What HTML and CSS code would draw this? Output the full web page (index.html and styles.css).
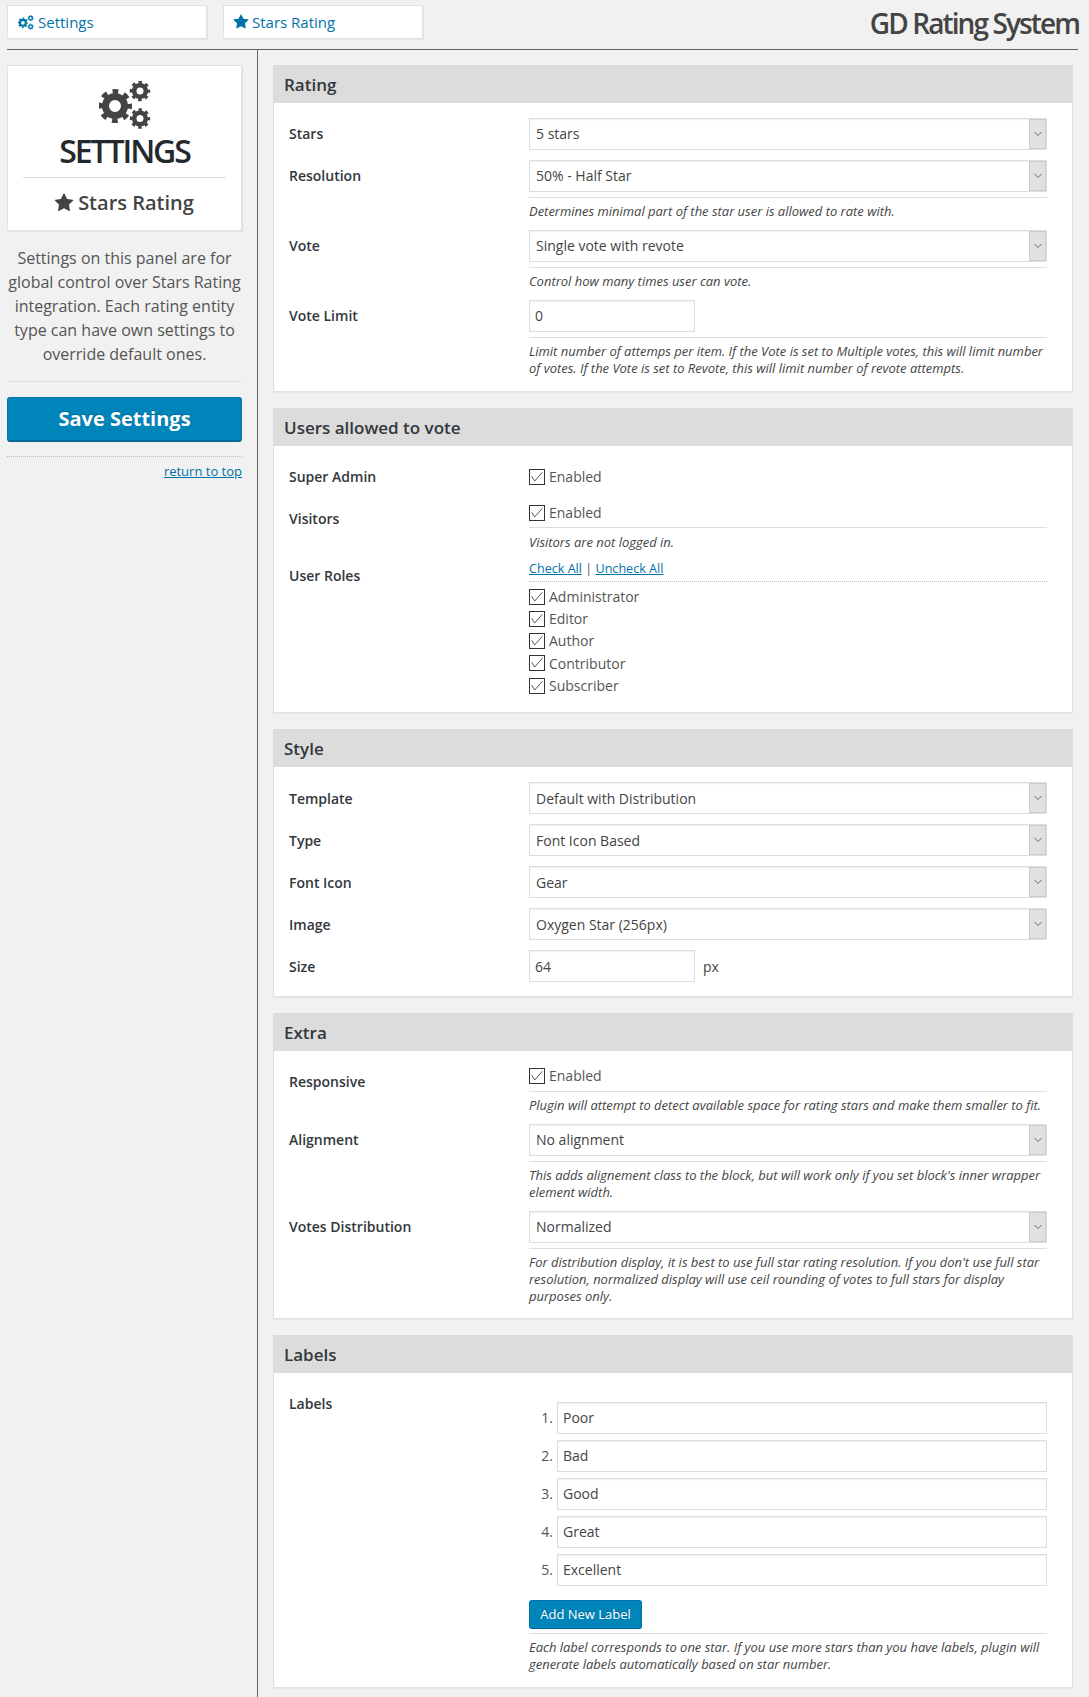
FILE: index.html
```html
<!DOCTYPE html>
<html lang="en">
<head>
<meta charset="utf-8">
<title>GD Rating System</title>
<link rel="stylesheet" href="styles.css">
</head>
<body>
<svg class="sprite" width="0" height="0" aria-hidden="true">
  <symbol id="gears" viewBox="0 0 52 48">
    <g fill="none" stroke="currentColor">
      <circle cx="16" cy="25" r="9.5" stroke-width="7"/>
      <circle cx="16" cy="25" r="14.5" stroke-width="5" stroke-dasharray="5.7 5.69" stroke-dashoffset="2.85"/>
      <circle cx="41" cy="10" r="5.8" stroke-width="4.6"/>
      <circle cx="41" cy="10" r="8.6" stroke-width="3.2" stroke-dasharray="3.4 3.35" stroke-dashoffset="1.7"/>
      <circle cx="41" cy="37.5" r="5.8" stroke-width="4.6"/>
      <circle cx="41" cy="37.5" r="8.6" stroke-width="3.2" stroke-dasharray="3.4 3.35" stroke-dashoffset="1.7"/>
    </g>
  </symbol>
  <symbol id="star" viewBox="0 0 1792 1792">
    <path fill="currentColor" d="M1728 647q0 22-26 48l-363 354 86 500q1 7 1 20 0 21-10.5 35.5t-30.5 14.5q-19 0-40-12l-449-236-449 236q-22 12-40 12-21 0-31.5-14.5t-10.5-35.5q0-6 2-20l86-500-364-354q-25-27-25-48 0-37 56-46l502-73 225-455q19-41 49-41t49 41l225 455 502 73q56 9 56 46z"/>
  </symbol>
  <symbol id="tick" viewBox="0 0 14 14">
    <path fill="none" stroke="currentColor" stroke-width="1" d="M1.7 6.3l3 4.7 7.6-8.7"/>
  </symbol>
  <symbol id="chev" viewBox="0 0 10 6">
    <path fill="none" stroke="currentColor" stroke-width="1" d="M1.5 1l3.5 3.5 3.5-3.5"/>
  </symbol>
</svg>

<header class="topbar">
  <a class="tab" href="#"><svg class="tab-gears"><use href="#gears"/></svg>Settings</a>
  <a class="tab" href="#"><svg class="tab-star"><use href="#star"/></svg>Stars Rating</a>
  <div class="brand">GD Rating System</div>
</header>

<div class="layout">
  <aside class="sidebar">
    <div class="card">
      <svg class="card-gears"><use href="#gears"/></svg>
      <div class="card-title">SETTINGS</div>
      <div class="card-sub"><svg class="card-star"><use href="#star"/></svg>Stars Rating</div>
    </div>
    <p class="intro">Settings on this panel are for global control over Stars Rating integration. Each rating entity type can have own settings to override default ones.</p>
    <button class="save" type="button">Save Settings</button>
    <div class="totop"><a href="#">return to top</a></div>
  </aside>

  <main class="main">
    <section class="panel">
      <h3 class="panel-head">Rating</h3>
      <div class="panel-body">
        <div class="row"><div class="label">Stars</div><div class="field">
          <div class="select"><span>5 stars</span><i class="arrow"><svg><use href="#chev"/></svg></i></div>
        </div></div>
        <div class="row"><div class="label">Resolution</div><div class="field">
          <div class="select"><span>50% - Half Star</span><i class="arrow"><svg><use href="#chev"/></svg></i></div>
          <p class="desc">Determines minimal part of the star user is allowed to rate with.</p>
        </div></div>
        <div class="row"><div class="label">Vote</div><div class="field">
          <div class="select"><span>Single vote with revote</span><i class="arrow"><svg><use href="#chev"/></svg></i></div>
          <p class="desc">Control how many times user can vote.</p>
        </div></div>
        <div class="row"><div class="label">Vote Limit</div><div class="field">
          <div class="text short">0</div>
          <p class="desc">Limit number of attemps per item. If the Vote is set to Multiple votes, this will limit number of votes. If the Vote is set to Revote, this will limit number of revote attempts.</p>
        </div></div>
      </div>
    </section>

    <section class="panel">
      <h3 class="panel-head">Users allowed to vote</h3>
      <div class="panel-body">
        <div class="row"><div class="label">Super Admin</div><div class="field">
          <div class="check tall"><span class="box"><svg><use href="#tick"/></svg></span>Enabled</div>
        </div></div>
        <div class="row"><div class="label">Visitors</div><div class="field">
          <div class="check"><span class="box"><svg><use href="#tick"/></svg></span>Enabled</div>
          <p class="desc tight">Visitors are not logged in.</p>
        </div></div>
        <div class="row"><div class="label">User Roles</div><div class="field">
          <div class="links"><a href="#">Check All</a> | <a href="#">Uncheck All</a></div>
          <div class="roles">
            <div class="check"><span class="box"><svg><use href="#tick"/></svg></span>Administrator</div>
            <div class="check"><span class="box"><svg><use href="#tick"/></svg></span>Editor</div>
            <div class="check"><span class="box"><svg><use href="#tick"/></svg></span>Author</div>
            <div class="check"><span class="box"><svg><use href="#tick"/></svg></span>Contributor</div>
            <div class="check"><span class="box"><svg><use href="#tick"/></svg></span>Subscriber</div>
          </div>
        </div></div>
      </div>
    </section>

    <section class="panel">
      <h3 class="panel-head">Style</h3>
      <div class="panel-body body-style">
        <div class="row"><div class="label">Template</div><div class="field">
          <div class="select"><span>Default with Distribution</span><i class="arrow"><svg><use href="#chev"/></svg></i></div>
        </div></div>
        <div class="row"><div class="label">Type</div><div class="field">
          <div class="select"><span>Font Icon Based</span><i class="arrow"><svg><use href="#chev"/></svg></i></div>
        </div></div>
        <div class="row"><div class="label">Font Icon</div><div class="field">
          <div class="select"><span>Gear</span><i class="arrow"><svg><use href="#chev"/></svg></i></div>
        </div></div>
        <div class="row"><div class="label">Image</div><div class="field">
          <div class="select"><span>Oxygen Star (256px)</span><i class="arrow"><svg><use href="#chev"/></svg></i></div>
        </div></div>
        <div class="row"><div class="label">Size</div><div class="field inline">
          <div class="text short">64</div><span class="unit">px</span>
        </div></div>
      </div>
    </section>

    <section class="panel">
      <h3 class="panel-head">Extra</h3>
      <div class="panel-body body-extra">
        <div class="row"><div class="label">Responsive</div><div class="field">
          <div class="check"><span class="box"><svg><use href="#tick"/></svg></span>Enabled</div>
          <p class="desc">Plugin will attempt to detect available space for rating stars and make them smaller to fit.</p>
        </div></div>
        <div class="row"><div class="label">Alignment</div><div class="field">
          <div class="select"><span>No alignment</span><i class="arrow"><svg><use href="#chev"/></svg></i></div>
          <p class="desc">This adds alignement class to the block, but will work only if you set block's inner wrapper element width.</p>
        </div></div>
        <div class="row"><div class="label">Votes Distribution</div><div class="field">
          <div class="select"><span>Normalized</span><i class="arrow"><svg><use href="#chev"/></svg></i></div>
          <p class="desc">For distribution display, it is best to use full star rating resolution. If you don't use full star resolution, normalized display will use ceil rounding of votes to full stars for display purposes only.</p>
        </div></div>
      </div>
    </section>

    <section class="panel">
      <h3 class="panel-head">Labels</h3>
      <div class="panel-body">
        <div class="row"><div class="label">Labels</div><div class="field">
          <ol class="label-list">
            <li><span class="num">1.</span><div class="text">Poor</div></li>
            <li><span class="num">2.</span><div class="text">Bad</div></li>
            <li><span class="num">3.</span><div class="text">Good</div></li>
            <li><span class="num">4.</span><div class="text">Great</div></li>
            <li><span class="num">5.</span><div class="text">Excellent</div></li>
          </ol>
          <button class="add" type="button">Add New Label</button>
          <p class="desc">Each label corresponds to one star. If you use more stars than you have labels, plugin will generate labels automatically based on star number.</p>
        </div></div>
      </div>
    </section>
  </main>
</div>
</body>
</html>
```
FILE: styles.css
```css
* { box-sizing: border-box; }
html, body { margin: 0; padding: 0; }
body {
  background: #f1f1f1;
  color: #444;
  font: 14px/1.4 "Open Sans", sans-serif;
  height: 1697px;
  overflow: hidden;
}
a { color: #0073aa; }
.sprite { position: absolute; }

.topbar {
  display: flex;
  gap: 16px;
  margin: 0 11px 0 7px;
  padding-top: 5px;
  height: 50px;
  border-bottom: 1px solid #666;
}
.tab {
  width: 200px;
  height: 34px;
  background: #fff;
  border: 1px solid #e2e2e2;
  box-shadow: 1px 1px 1px rgba(0,0,0,.05);
  display: flex;
  align-items: center;
  padding-left: 10px;
  font-size: 15px;
  color: #0073aa;
  text-decoration: none;
}
.tab-gears { width: 16px; height: 15px; margin-right: 4px; }
.tab-star { width: 16px; height: 16px; margin-left: -1px; margin-right: 3px; }
.brand {
  margin-left: auto;
  margin-right: -1px;
  margin-top: -1px;
  font-size: 28px;
  line-height: 38px;
  font-weight: 600;
  letter-spacing: -1.9px;
  color: #444;
}

.layout { display: flex; margin-left: 7px; margin-right: 11px; }
.sidebar {
  width: 251px;
  padding: 15px 15px 0 0;
  border-right: 1px solid #666;
  min-height: 1647px;
}
.card {
  background: #fff;
  border: 1px solid #e2e2e2;
  box-shadow: 1px 1px 1px rgba(0,0,0,.06);
  height: 166px;
  padding: 15px 15px 0;
  text-align: center;
}
.card-gears { display: block; width: 52px; height: 48px; margin: 0 auto; color: #444; }
.card-title {
  font-size: 32px;
  line-height: 42px;
  letter-spacing: -2.1px;
  color: #23282d;
  font-weight: 600;
  margin-top: 1px;
  padding-bottom: 5px;
  border-bottom: 1px solid #ddd;
}
.card-sub {
  display: flex;
  align-items: center;
  justify-content: center;
  font-size: 20px;
  font-weight: 600;
  line-height: 28px;
  margin-top: 11px;
  color: #444;
}
.card-star { width: 20px; height: 20px; margin-left: -1px; margin-right: 4px; color: #444; }
.intro {
  margin: 0;
  padding: 15px 0 0;
  height: 151px;
  font-size: 16px;
  line-height: 24px;
  text-align: center;
  color: #555;
  border-bottom: 1px solid #ddd;
}
.save {
  display: block;
  width: 100%;
  height: 45px;
  margin-top: 15px;
  background: #0085ba;
  border: 1px solid #0073aa;
  border-bottom: 2px solid #006799;
  border-radius: 3px;
  color: #fff;
  font: 700 20px/1 "Open Sans", sans-serif;
  text-shadow: 0 -1px 1px #006799;
}
.totop {
  margin-top: 14px;
  border-top: 1px dotted #bbb;
  padding-top: 5px;
  text-align: right;
  font-size: 13px;
  line-height: 19px;
}

.main { flex: 1; padding: 15px 5px 0 15px; }
.panel {
  background: #fff;
  border: 1px solid #e2e2e2;
  border-top: 0;
  box-shadow: 0 1px 1px rgba(0,0,0,.04);
  margin-bottom: 16px;
}
.panel-head {
  margin: 0 -1px;
  height: 38px;
  padding-left: 11px;
  background: #dcdcdc;
  color: #32373c;
  font-size: 17px;
  font-weight: 600;
  line-height: 40px;
}
.panel-body { padding: 15px 25px 14px 15px; }
.body-extra { padding-bottom: 13px; }
.row { display: flex; margin-bottom: 10px; }
.row:last-child { margin-bottom: 0; }
.label {
  flex: 0 0 240px;
  font-weight: 600;
  line-height: 32px;
  color: #32373c;
}
.field { flex: 1; min-width: 0; }
.field.inline { display: flex; align-items: center; }
.unit { margin: 2px 0 0 8px; }

.select, .text {
  height: 32px;
  background: #fff;
  border: 1px solid #ddd;
  box-shadow: inset 0 1px 2px rgba(0,0,0,.07);
  line-height: 30px;
  color: #444;
}
.select { display: flex; justify-content: space-between; padding-left: 6px; }
.text { padding-left: 5px; }
.text.short { width: 166px; }
.body-style .label { line-height: 34px; height: 32px; }
.body-style .select, .body-style .text { line-height: 32px; }
.arrow {
  width: 17px;
  height: 30px;
  background: #e1e1e1;
  border: 1px solid #ccc;
  display: flex;
  align-items: center;
  justify-content: center;
}
.arrow svg { width: 10px; height: 6px; color: #666; }

.desc {
  margin: 5px 0 0;
  padding-top: 5px;
  border-top: 1px solid #ddd;
  font-size: 12.98px;
  font-style: italic;
  line-height: 17px;
  color: #444;
}
.desc.tight { margin-top: 4px; padding-top: 6px; height: 23px; }
.check {
  display: flex;
  align-items: center;
  height: 20px;
  color: #555;
}
.check.tall { height: 32px; }
.box {
  width: 16px;
  height: 16px;
  margin-right: 4px;
  background: #fff;
  border: 1px solid #333;
  display: block;
  flex: none;
}
.box svg { display: block; width: 14px; height: 14px; color: #555; }

.links {
  height: 22px;
  font-size: 12.6px;
  line-height: 17px;
  border-bottom: 1px dotted #bbb;
  color: #555;
}
.roles { margin-top: 3.5px; padding-bottom: 1.5px; }
.roles .check { height: 22.25px; }

.label-list { list-style: none; margin: 14px 0 0; padding: 0; }
.label-list li { display: flex; align-items: center; margin-bottom: 6px; }
.num { flex: 0 0 24px; text-align: right; margin-right: 4px; color: #555; }
.label-list .text { flex: 1; }
.add {
  display: block;
  width: 113px;
  height: 29px;
  margin-top: 14px;
  background: #0085ba;
  border: 1px solid #0073aa;
  border-bottom-color: #006799;
  border-radius: 3px;
  color: #fff;
  font: 13px/1 "Open Sans", sans-serif;
  text-shadow: 0 -1px 1px #006799;
}
.add + .desc { margin-top: 4px; }
```
